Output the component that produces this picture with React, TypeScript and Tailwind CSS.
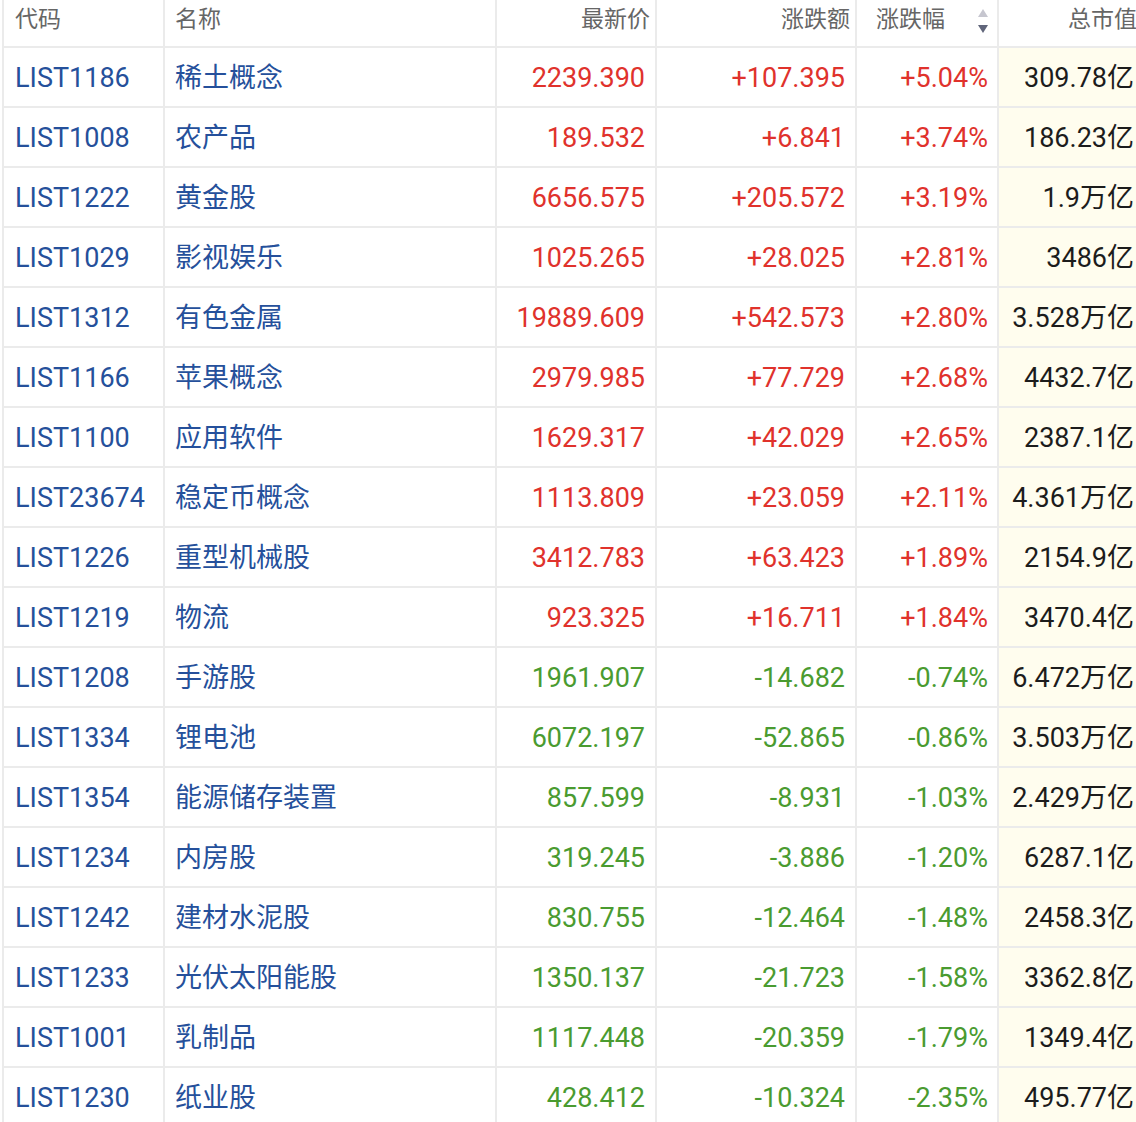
const rows: [string, string, string, string, string, string][] = [
  ["LIST1186", "稀土概念", "2239.390", "+107.395", "+5.04%", "309.78亿"],
  ["LIST1008", "农产品", "189.532", "+6.841", "+3.74%", "186.23亿"],
  ["LIST1222", "黄金股", "6656.575", "+205.572", "+3.19%", "1.9万亿"],
  ["LIST1029", "影视娱乐", "1025.265", "+28.025", "+2.81%", "3486亿"],
  ["LIST1312", "有色金属", "19889.609", "+542.573", "+2.80%", "3.528万亿"],
  ["LIST1166", "苹果概念", "2979.985", "+77.729", "+2.68%", "4432.7亿"],
  ["LIST1100", "应用软件", "1629.317", "+42.029", "+2.65%", "2387.1亿"],
  ["LIST23674", "稳定币概念", "1113.809", "+23.059", "+2.11%", "4.361万亿"],
  ["LIST1226", "重型机械股", "3412.783", "+63.423", "+1.89%", "2154.9亿"],
  ["LIST1219", "物流", "923.325", "+16.711", "+1.84%", "3470.4亿"],
  ["LIST1208", "手游股", "1961.907", "-14.682", "-0.74%", "6.472万亿"],
  ["LIST1334", "锂电池", "6072.197", "-52.865", "-0.86%", "3.503万亿"],
  ["LIST1354", "能源储存装置", "857.599", "-8.931", "-1.03%", "2.429万亿"],
  ["LIST1234", "内房股", "319.245", "-3.886", "-1.20%", "6287.1亿"],
  ["LIST1242", "建材水泥股", "830.755", "-12.464", "-1.48%", "2458.3亿"],
  ["LIST1233", "光伏太阳能股", "1350.137", "-21.723", "-1.58%", "3362.8亿"],
  ["LIST1001", "乳制品", "1117.448", "-20.359", "-1.79%", "1349.4亿"],
  ["LIST1230", "纸业股", "428.412", "-10.324", "-2.35%", "495.77亿"],
];

const grid = "grid grid-cols-[161px_332px_160px_200px_142px_151px]";
const cell = "flex items-center border-r-2 border-b-2 border-[#ebebeb]";

function SortArrows() {
  return (
    <svg width="12" height="26" viewBox="0 0 12 26" className="ml-auto mr-[8px]">
      <path d="M6 1 L11 9 L1 9 Z" fill="#c6c6cf" />
      <path d="M6 25 L11 17 L1 17 Z" fill="#60657a" />
    </svg>
  );
}

export default function App() {
  return (
    <div
      className="w-[1136px] h-[1122px] overflow-hidden bg-white"
      style={{ fontFamily: 'Roboto, "Noto Sans CJK SC", sans-serif' }}
    >
      <div className="ml-[2px] w-[1148px] border-l-2 border-[#ebebeb]">
        <div className={`${grid} h-[48px] text-[23px] text-[#666666]`}>
          <div className={`${cell} pl-[11px] pb-[5px]`}>代码</div>
          <div className={`${cell} pl-[10px] pb-[5px]`}>名称</div>
          <div className={`${cell} justify-end pr-[5px] pb-[5px]`}>最新价</div>
          <div className={`${cell} justify-end pr-[5px] pb-[5px]`}>涨跌额</div>
          <div className={`${cell} pl-[19px] pb-[4px]`}>
            <span className="pb-[1px]">涨跌幅</span>
            <SortArrows />
          </div>
          <div className={`${cell} justify-end pr-[11px] pb-[5px]`}>总市值</div>
        </div>
        {rows.map((r) => {
          const up = r[3].startsWith("+");
          const color = up ? "text-[#e0322c]" : "text-[#4a9b30]";
          return (
            <div key={r[0]} className={`${grid} h-[60px] text-[27px]`}>
              <div className={`${cell} pl-[11px] pt-[3px] text-[#25509b]`}>{r[0]}</div>
              <div className={`${cell} pl-[10px] pt-[3px] text-[#25509b]`}>{r[1]}</div>
              <div className={`${cell} justify-end pr-[10px] pt-[3px] ${color}`}>{r[2]}</div>
              <div className={`${cell} justify-end pr-[10px] pt-[3px] ${color}`}>{r[3]}</div>
              <div className={`${cell} justify-end pr-[9px] pt-[3px] ${color}`}>{r[4]}</div>
              <div className={`${cell} justify-end pr-[14px] pt-[3px] bg-[#fffdee] text-[#1c1c1c]`}>
                {r[5]}
              </div>
            </div>
          );
        })}
      </div>
    </div>
  );
}
